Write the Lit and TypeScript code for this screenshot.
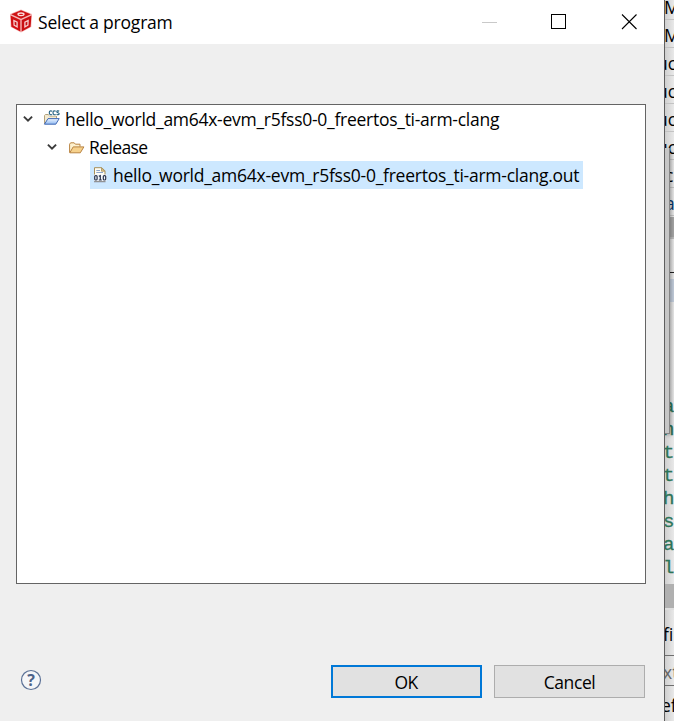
import { LitElement, html, css, svg } from "lit";
import { customElement } from "lit/decorators.js";

const cubeIcon = html`<svg class="cube" width="24" height="24" viewBox="0 0 24 24">
  <path d="M12 0.5L23 5L22.3 18L12 23.5L1.7 18L1 5Z" fill="#f6b9b9"/>
  <path d="M12 1.2L21.8 5.2L12 9.8L2.2 5.2Z" fill="#cf1214"/>
  <path d="M1.6 6.4L11.3 10.9V22.6L2.4 17.8Z" fill="#d01013"/>
  <path d="M22.4 6.4L12.7 10.9V22.6L21.6 17.8Z" fill="#c90f12"/>
  <ellipse cx="12" cy="5.3" rx="3" ry="1.3" fill="#d01013" stroke="#fbdcdc" stroke-width="1.3"/>
  <path d="M4.9 11.5L8.1 13.1V17.9L5.1 16.2Z" fill="#c40f12" stroke="#f9cfcf" stroke-width="1.3"/>
  <path d="M19.1 11.5L15.9 13.1V17.9L18.9 16.2Z" fill="#c40f12" stroke="#f9cfcf" stroke-width="1.3"/>
</svg>`;

const chevron = html`<svg class="chev" width="10" height="8" viewBox="0 0 10 8">
  <path d="M0.9 1.6L5 5.6L9.1 1.6" fill="none" stroke="#3b3b3b" stroke-width="1.9"/>
</svg>`;

const folderShape = (line: string, back: string, front: string) => svg`
  <path d="M0.6 10.6V2.2L1.6 0.8H5.2L6.4 2.2H11V4.6" fill="${back}" stroke="${line}"/>
  <path d="M0.8 10.8L4.2 4.9H14.9L11.3 10.8Z" fill="${front}" stroke="${line}" stroke-linejoin="round"/>`;

const projectIcon = html`<svg width="17" height="16" viewBox="0 0 17 16">
  <defs><linearGradient id="pf" x2="0" y2="1"><stop stop-color="#edf5ff"/><stop offset="1" stop-color="#91baf2"/></linearGradient></defs>
  <path d="M1.5 14V5.5L2.4 4.5H5.5L6.5 6H13.5V8.5" fill="#f3ead0" stroke="#b3a17b"/>
  <path d="M1.5 14.2L5 8.6H16.2L12.8 14.2Z" fill="url(#pf)" stroke="#4169b4" stroke-linejoin="round"/>
  <path d="M5.8 0H17V5.6H5.8Z" fill="#fff"/>
  <g fill="none" stroke="#286483" stroke-width="1.15">
    <path d="M9.2 1.3C7.4 0.3 6.3 1.2 6.3 2.8S7.5 5.2 9.2 4.4"/>
    <path d="M12.7 1.3C10.9 0.3 10 1.2 10 2.8S11.1 5.2 12.7 4.4"/>
    <path d="M16.2 1.1C14.6 0.5 13.8 1 13.8 1.7C13.8 3 16.2 2.5 16.2 3.8C16.2 4.8 14.7 5 13.6 4.3"/>
  </g>
</svg>`;

const folderIcon = html`<svg width="16" height="12" viewBox="0 0 16 12">
  ${folderShape("#b98341", "#fdf1cf", "#f6d18c")}
</svg>`;

const binaryIcon = html`<svg width="14" height="16" viewBox="0 0 14 16">
  <path d="M1.5 14.5V0.7H8.8L12 3.9V14.5Z" fill="#fffdf4" stroke="#a78f59"/>
  <path d="M8.5 1V4.2H11.8Z" fill="#e4cb8a" stroke="#a78f59" stroke-width=".8"/>
  <path d="M3.3 3.5H7M3.3 5.5H10" stroke="#8ea5c9"/>
  <path d="M1 7.5H13.5V14H1Z" fill="#f4f7fb"/>
  <g fill="none" stroke="#29344d" stroke-width="1.2">
    <rect x="1.7" y="8.6" width="2.4" height="4.4" rx="1"/>
    <path d="M5.8 9.3L7.3 8.6V13M5.8 13H8.8"/>
    <rect x="10.3" y="8.6" width="2.4" height="4.4" rx="1"/>
  </g>
  <path d="M1 14.8H12.5" stroke="#8995ad"/>
</svg>`;

@customElement("app-root")
export class AppRoot extends LitElement {
  static styles = css`
    :host {
      display: grid;
      grid-template-columns: 664px 10px;
      width: 674px;
      height: 721px;
      overflow: hidden;
      font: 17.5px/28px "Open Sans", "Noto Sans", sans-serif;
      color: #000;
      white-space: nowrap;
    }
    svg { display: block; flex: none; }
    .dialog {
      display: flex;
      flex-direction: column;
      height: 721px;
      background: #efefef;
    }
    .title {
      display: flex;
      align-items: center;
      height: 44px;
      background: #fff;
      box-sizing: border-box;
      padding: 0 26px 0 9px;
    }
    .cube { margin-top: -2px; }
    .title .text { margin-left: 5px; letter-spacing: -0.22px; flex: 1; }
    .controls { display: flex; gap: 54px; }
    .tree {
      margin: 60px 18px 0 16px;
      height: 480px;
      box-sizing: border-box;
      border: 1px solid #646464;
      background: #fff;
    }
    .row { display: flex; align-items: center; height: 28px; }
    .row .label { letter-spacing: -0.27px; }
    .l1 { padding-left: 6px; }
    .l1 .icon { margin: -2px 5px 0 10px; }
    .l2 { padding-left: 30px; }
    .l2 .icon { margin: 1px 4px 0 12px; }
    .l2 .label { letter-spacing: -0.6px; }
    .l3 {
      margin-left: 73px;
      width: 493px;
      box-sizing: border-box;
      padding-left: 3px;
      background: #cde8ff;
    }
    .l3 .icon { margin: 0 6px 0 0; }
    .l3 .label { letter-spacing: -0.25px; }
    .foot {
      display: flex;
      margin: 81px 19px 0 20px;
      height: 33px;
      align-items: center;
    }
    .help { margin-top: -3px; }
    .q { font: bold 16px "Open Sans", sans-serif; fill: #4c638a; }
    .btn {
      height: 33px;
      width: 151px;
      box-sizing: border-box;
      border: 1px solid #adadad;
      background: #e1e1e1;
      display: flex;
      align-items: center;
      justify-content: center;
      margin-left: 12px;
      letter-spacing: -0.4px;
    }
    .ok { border: 2px solid #0078d7; margin-left: auto; padding-right: 1px; letter-spacing: -0.7px; }
    .behind {
      position: relative;
      height: 721px;
      overflow: hidden;
      border-left: 1px solid #5e5e5e;
      background: linear-gradient(90deg, #cfcfcf, #e9e9e9 9px);
      box-sizing: border-box;
      display: flex;
      flex-direction: column;
    }
    .list { height: 217px; flex: none; overflow: hidden; }
    .cell {
      height: 28px;
      box-sizing: border-box;
      border-bottom: 1px solid #c3c3c3;
      line-height: 30px;
    }
    .cell:first-child { height: 20px; line-height: 14px; }
    .cell span { display: inline-block; }
    .m { margin-left: -1px; }
    .uc { margin-left: -8px; }
    .one { margin-left: 0; }
    .sel { color: #06396f; }
    .bar { height: 20px; flex: none; background: #a6a6a6; border-bottom: 2px solid #bcbcbc; }
    .pane { height: 32px; flex: none; border-bottom: 1px solid #202020; margin-top: 1px; }
    .blue { height: 23px; flex: none; background: #c2cddb; margin-top: 6px; }
    .gap { height: 94px; flex: none; }
    .code {
      font: 19px/23px "Liberation Mono", monospace;
      -webkit-text-stroke: 0.3px #2d7458;
      color: #2d7458;
      height: 188px;
      flex: none;
    }
    .code div { height: 23px; margin-left: -2px; }
    .scroll { height: 24px; flex: none; background: #b0b0b0; border-bottom: 2px solid #dedede; }
    .form div { height: 30px; box-sizing: border-box; line-height: 30px; }
    .form .first { height: 46px; padding-top: 9px; border-bottom: 1px solid #6e6e6e; text-indent: -2px; }
    .form .second { border-bottom: 1px solid #6e6e6e; color: #666; line-height: 32px; text-indent: -2px; }
    .form .third { line-height: 39px; height: 36px; text-indent: -4px; }
    .panel {
      position: absolute;
      left: 0;
      top: 148px;
      width: 5px;
      height: 286px;
      box-sizing: border-box;
      border-right: 1px solid #858585;
      border-bottom: 1px solid #858585;
      background: #c6c6c6;
      box-shadow: 1px 1px 4px #0005;
    }
  `;

  render() {
    return html`
      <div class="dialog">
        <div class="title">
          ${cubeIcon}
          <span class="text">Select a program</span>
          <div class="controls">
            <svg width="15" height="16"><path d="M0 8.5H15" stroke="#c9c9c9"/></svg>
            <svg width="16" height="16"><rect x=".5" y=".5" width="14" height="14" fill="none" stroke="#000"/></svg>
            <svg width="17" height="16"><path d="M1 .5L15.5 15M15.5 .5L1 15" stroke="#000" stroke-width="1.1"/></svg>
          </div>
        </div>
        <div class="tree">
          <div class="row l1">${chevron}<span class="icon">${projectIcon}</span>
            <span class="label">hello_world_am64x-evm_r5fss0-0_freertos_ti-arm-clang</span></div>
          <div class="row l2">${chevron}<span class="icon">${folderIcon}</span>
            <span class="label">Release</span></div>
          <div class="row l3"><span class="icon">${binaryIcon}</span>
            <span class="label">hello_world_am64x-evm_r5fss0-0_freertos_ti-arm-clang.out</span></div>
        </div>
        <div class="foot">
          <svg class="help" width="22" height="22" viewBox="0 0 22 22">
            <circle cx="11" cy="11" r="9.5" fill="#f5f6f8" stroke="#5b7196" stroke-width="1.2"/>
            <text class="q" x="11" y="16.7" text-anchor="middle">?</text>
          </svg>
          <div class="btn ok">OK</div>
          <div class="btn">Cancel</div>
        </div>
      </div>
      <div class="behind">
        <div class="list">
          <div class="cell"><span class="m">M</span></div>
          <div class="cell"><span class="m">M</span></div>
          ${[0, 1, 2, 3].map(() => html`<div class="cell"><span class="uc">uc</span></div>`)}
          <div class="cell"><span class="one">c</span></div>
          <div class="cell sel"><span class="one">a</span></div>
        </div>
        <div class="bar"></div>
        <div class="pane"></div>
        <div class="blue"></div>
        <div class="gap"></div>
        <div class="code">
          ${["a", "n", "t", "t", "h", "s", "a", "l"].map((c) => html`<div>${c}</div>`)}
        </div>
        <div class="scroll"></div>
        <div class="form">
          <div class="first">fi</div>
          <div class="second">xt</div>
          <div class="third">ef</div>
        </div>
        <div class="panel"></div>
      </div>
    `;
  }
}
